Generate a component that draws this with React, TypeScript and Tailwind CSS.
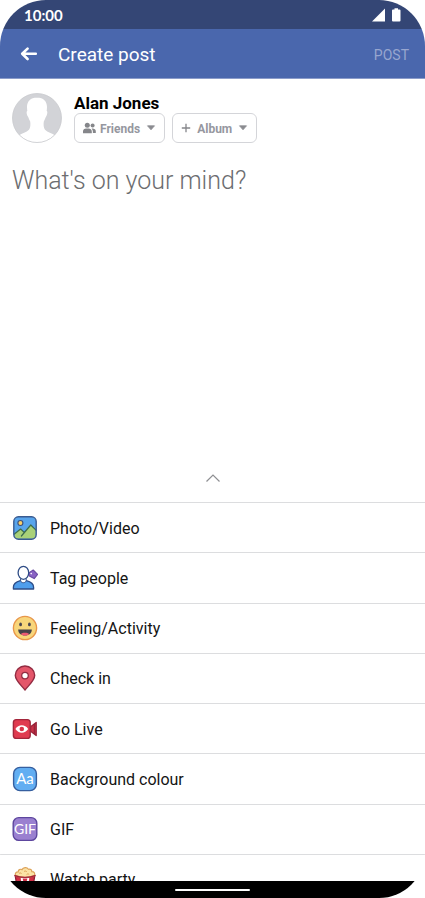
import React from 'react'

const PhotoIcon = () => (
  <svg viewBox="0 0 26 26" className="size-[26px]" aria-hidden="true">
    <rect x="1.8" y="1.8" width="22.4" height="22.4" rx="4.6" fill="#58a5ec" />
    <path d="M2.4 18.6 8.6 14l3.6 3.4 6.6-7.4 5 5v5.2a3.6 3.6 0 0 1-3.6 3.6H5.8a3.6 3.6 0 0 1-3.6-3.6z" fill="#a9d178" />
    <path d="M2.4 19 8.6 14l3.6 3.4M9.4 21l9.4-11 5.2 5.2" fill="none" stroke="#3d6b4f" strokeWidth="1.2" strokeLinejoin="round" strokeLinecap="round" />
    <circle cx="8.4" cy="8" r="2.5" fill="#f8cf6a" stroke="#3a4f7c" strokeWidth="1.1" />
    <rect x="1.8" y="1.8" width="22.4" height="22.4" rx="4.6" fill="none" stroke="#3a5b90" strokeWidth="1.4" />
  </svg>
)

const TagIcon = () => (
  <svg viewBox="0 0 26 26" className="size-[26px]" aria-hidden="true">
    <path d="m17.2 7.6 4-2.6 4.4 4.4-3.4 4.2-5.4-2.8z" fill="#8a63c4" stroke="#6a4aa3" strokeWidth="1.1" strokeLinejoin="round" />
    <circle cx="19.2" cy="8.6" r=".8" fill="#fff" />
    <path d="M1.400 24v-1.800c0-3.600 2.600-5.400 7-6.600h6c4.400 1.200 7.200 3 7.200 6.600V24z" fill="#4f9eec" stroke="#2f4d86" strokeWidth="1.3" strokeLinejoin="round" />
    <path d="M8.600 13.500v2.400c1 2.400 4.600 2.400 5.600 0v-2.400z" fill="#fff" stroke="#2f4d86" strokeWidth="1" />
    <ellipse cx="11.400" cy="7.800" rx="5.300" ry="6.500" fill="#fff" stroke="#2f4d86" strokeWidth="1.3" />
  </svg>
)

const FeelingIcon = () => (
  <svg viewBox="0 0 26 26" className="size-[26px]" aria-hidden="true">
    <circle cx="13" cy="13" r="11.600" fill="#f8d67b" stroke="#e8964a" strokeWidth="1.400" />
    <ellipse cx="8.600" cy="9.400" rx="1.400" ry="1.900" fill="#4a4550" />
    <ellipse cx="17.400" cy="9.400" rx="1.400" ry="1.900" fill="#4a4550" />
    <path d="M6.200 14.600h13.600c.1 3.800-2.800 6-6.800 6s-6.900-2.200-6.800-6z" fill="#454149" />
    <path d="M8.800 19c1.800-1.800 6.600-1.800 8.400 0-2.200 2.200-6.200 2.200-8.400 0z" fill="#ec5a73" />
  </svg>
)

const CheckInIcon = () => (
  <svg viewBox="0 0 26 26" className="size-[26px]" aria-hidden="true">
    <path d="M13 25C9.400 20.300 3.300 15.800 3.300 10.300a9.700 9.300 0 0 1 19.400 0C22.700 15.800 16.600 20.300 13 25z" fill="#e4566a" stroke="#922c42" strokeWidth="1.400" strokeLinejoin="round" />
    <circle cx="13" cy="10.600" r="3.300" fill="#fff" stroke="#922c42" strokeWidth="1.300" />
  </svg>
)

const LiveIcon = () => (
  <svg viewBox="0 0 26 26" className="size-[26px]" aria-hidden="true">
    <path d="m18.600 10.800 5.600-4.300v13l-5.600-4.300z" fill="#c93248" stroke="#962238" strokeWidth="1.300" strokeLinejoin="round" />
    <path d="M22.300 8v10" stroke="#962238" strokeWidth="1.200" />
    <rect x="1.400" y="3.600" width="16.800" height="18.800" rx="3" fill="#e03b50" stroke="#a3263b" strokeWidth="1.400" />
    <path d="M3.400 13c3-4.900 9.800-4.900 12.800 0-3 4.900-9.800 4.900-12.800 0z" fill="#fff" />
    <circle cx="9.800" cy="13" r="2.300" fill="#d93449" />
  </svg>
)

const BackgroundIcon = () => (
  <svg viewBox="0 0 26 26" className="size-[26px]" aria-hidden="true">
    <rect x="1.600" y="1.400" width="22.800" height="23.200" rx="6.400" fill="#62aef2" stroke="#365f9f" strokeWidth="1.400" />
    <text x="13" y="17.600" textAnchor="middle" fontFamily="Lato, sans-serif" fontWeight="400" fontSize="15" fill="#fff">Aa</text>
  </svg>
)

const GifIcon = () => (
  <svg viewBox="0 0 26 26" className="size-[26px]" aria-hidden="true">
    <rect x="1.200" y="1.600" width="23.600" height="22.800" rx="5.600" fill="#9a80d0" stroke="#5d469e" strokeWidth="1.400" />
    <text x="13" y="18" textAnchor="middle" fontFamily="Lato, sans-serif" fontWeight="400" fontSize="14" fill="#fff">GIF</text>
  </svg>
)

const PopcornIcon = () => (
  <svg viewBox="0 0 26 26" className="size-[26px]" aria-hidden="true">
    <path d="m3.200 9.500 2.400 15h14.800l2.400-15z" fill="#d32f45" stroke="#8e2338" strokeWidth="1.300" strokeLinejoin="round" />
    <path d="m8.600 11 1.600 13.500h5.600L17.400 11z" fill="#fff" />
    <path d="M10.600 12.500h4.800l-.8 3h-3.200z" fill="#d32f45" />
    <path d="M3.600 9.600C2.600 7.300 4.200 5.600 6.200 5.800c0-2 2-3.100 3.800-2.200C11.200 1.300 15 1 16.400 3.200c2-.6 3.600.6 3.400 2.400 2.400-.2 3.600 2 2.600 4-5.400 2.500-13.400 2.500-18.800 0z" fill="#fbe3a6" stroke="#dda35a" strokeWidth="1.200" />
    <path d="M7 7.600c1-1 2-.8 2.600.2M12 5.600c1-1 2.400-.6 2.800.4M14.600 8.600c.8-1 2-.8 2.600 0" fill="none" stroke="#dda35a" strokeWidth="1" />
    <path d="M3 9.600c5.800 2.400 14.200 2.400 20 0" fill="none" stroke="#a3263b" strokeWidth="1.400" strokeLinecap="round" />
  </svg>
)

const options = [
  { label: 'Photo/Video', icon: PhotoIcon },
  { label: 'Tag people', icon: TagIcon },
  { label: 'Feeling/Activity', icon: FeelingIcon },
  { label: 'Check in', icon: CheckInIcon },
  { label: 'Go Live', icon: LiveIcon },
  { label: 'Background colour', icon: BackgroundIcon },
  { label: 'GIF', icon: GifIcon },
  { label: 'Watch party', icon: PopcornIcon },
]

const Caret = () => (
  <svg viewBox="0 0 10 6" className="h-[6px] w-[10px]" aria-hidden="true">
    <path d="M1.500 .8h7L5 4.800z" fill="#8a8b90" stroke="#8a8b90" strokeWidth=".8" strokeLinejoin="round" />
  </svg>
)

const StatusBar = () => (
  <div className="flex h-[29px] items-center justify-between bg-[#344675] pr-6 pl-6 text-white">
    <span className="font-[Lato,sans-serif] text-[15px] leading-5 font-bold">10:00</span>
    <svg viewBox="0 0 30 14" className="h-[14px] w-[30px]" aria-hidden="true">
      <path d="M1 13.500 14 .5v13z" fill="#fff" />
      <path d="M21 2.500q0-1 1-1h1.500V.3h3.500v1.200h1.500q1 0 1 1v10q0 1-1 1H22q-1 0-1-1z" fill="#fff" />
    </svg>
  </div>
)

const Header = () => (
  <header className="flex h-[50px] items-center border-b border-[#8b9cca] bg-[#4a67ad] px-4 text-white">
    <button type="button" aria-label="Back" className="flex w-[42px] items-center pl-1">
      <svg viewBox="0 0 18 16" className="h-[16px] w-[18px]" aria-hidden="true">
        <path d="M7.600 2.600 2.200 7.800l5.400 5.200M2.700 7.800h13.100" fill="none" stroke="#fff" strokeWidth="2.600" strokeLinecap="round" strokeLinejoin="round" />
      </svg>
    </button>
    <h1 className="flex-1 pt-0.5 text-[19px] leading-6">Create post</h1>
    <button type="button" className="pt-0.5 text-[14px] leading-5 text-[#98a6cf]">POST</button>
  </header>
)

const Author = () => (
  <div className="flex gap-3 px-3 pt-[14px]">
    <svg viewBox="0 0 50 50" className="size-[50px]" aria-hidden="true">
      <defs>
        <clipPath id="avatar">
          <circle cx="25" cy="25" r="24.500" />
        </clipPath>
      </defs>
      <circle cx="25" cy="25" r="24.500" fill="#d2d3d7" />
      <g clipPath="url(#avatar)" fill="#fff">
        <path d="M25 4.500c-6.500 0-10 4-10 9.500 0 1.500.2 3 .3 4-1 .2-.9 3.200.6 5.600.8 1.200 1.100 3 2.300 5 .4 3.200.3 6-1.200 8.200-2.500 2.700-7 3.200-10.500 6L4 50h42l-2.500-7.200c-3.500-2.800-8-3.300-10.500-6-1.500-2.200-1.600-5-1.200-8.200 1.200-2 1.500-3.800 2.300-5 1.500-2.400 1.600-5.400.6-5.600.1-1 .3-2.500.3-4 0-5.500-3.500-9.500-10-9.500z" />
      </g>
      <circle cx="25" cy="25" r="24.500" fill="none" stroke="#c9cace" strokeWidth=".8" />
    </svg>
    <div className="flex flex-col">
      <span className="text-[17px] leading-5 font-bold text-black">Alan Jones</span>
      <div className="flex gap-[7px] text-[12px] font-bold text-[#96979f]">
        <button type="button" className="flex h-[30px] items-center rounded-md border border-[#d4d5d9] px-2">
          <svg viewBox="0 0 13 12" className="mr-1 h-[12px] w-[13px]" fill="#85868a" aria-hidden="true">
            <circle cx="4.300" cy="3.200" r="2.500" />
            <path d="M-.2 11.200V9.800c0-2 1.600-3.200 3.200-3.200h2.600c1.700 0 3.200 1.200 3.200 3.200v1.400z" />
            <circle cx="9.600" cy="3.600" r="2" />
            <path d="M8.600 6.600c2.300-.4 4.200.7 4.200 2.700v1.700h-2.900c.1-1.800-.2-3.300-1.300-4.400z" />
          </svg>
          <span className="mr-[6px] pt-0.5">Friends</span>
          <Caret />
        </button>
        <button type="button" className="flex h-[30px] items-center rounded-md border border-[#d4d5d9] px-2">
          <svg viewBox="0 0 10 10" className="mr-[6px] size-[10px]" aria-hidden="true">
            <path d="M5 .8v8.400M.8 5h8.400" stroke="#85868a" strokeWidth="1.300" />
          </svg>
          <span className="mr-[6px] pt-0.5">Album</span>
          <Caret />
        </button>
      </div>
    </div>
  </div>
)

const App = () => {
  return (
    <div className="flex min-h-screen flex-col overflow-hidden rounded-[46px] bg-white font-[Roboto,sans-serif]">
      <StatusBar />
      <Header />
      <main className="flex flex-1 flex-col">
        <Author />
        <textarea
          aria-label="What's on your mind?"
          placeholder="What's on your mind?"
          className="mt-[22px] block w-full flex-1 resize-none px-3 text-[25px] leading-8 font-light text-black outline-none placeholder:text-[#6c6d70]"
        />
        <button type="button" aria-label="Show less" className="flex h-12 items-center justify-center">
          <svg viewBox="0 0 16 10" className="h-[10px] w-[16px]" aria-hidden="true">
            <path d="M1.500 8.500 8 2l6.500 6.500" fill="none" stroke="#8e8f92" strokeWidth="1.200" />
          </svg>
        </button>
        <div className="h-[379px] overflow-hidden">
          <ul className="grid h-[402px] auto-rows-fr">
            {options.map(({ label, icon: Icon }) => (
              <li key={label} className="border-t border-[#dcdddf]">
                <button type="button" className="flex h-full w-full items-center gap-3 px-3 text-left text-[16px] leading-6 text-[#141414]">
                  <Icon />
                  <span className="pt-0.5">{label}</span>
                </button>
              </li>
            ))}
          </ul>
        </div>
      </main>
      <div className="flex h-[17px] items-center justify-center bg-black">
        <div className="h-[2px] w-[75px] rounded-full bg-white" />
      </div>
    </div>
  )
}

export default App
